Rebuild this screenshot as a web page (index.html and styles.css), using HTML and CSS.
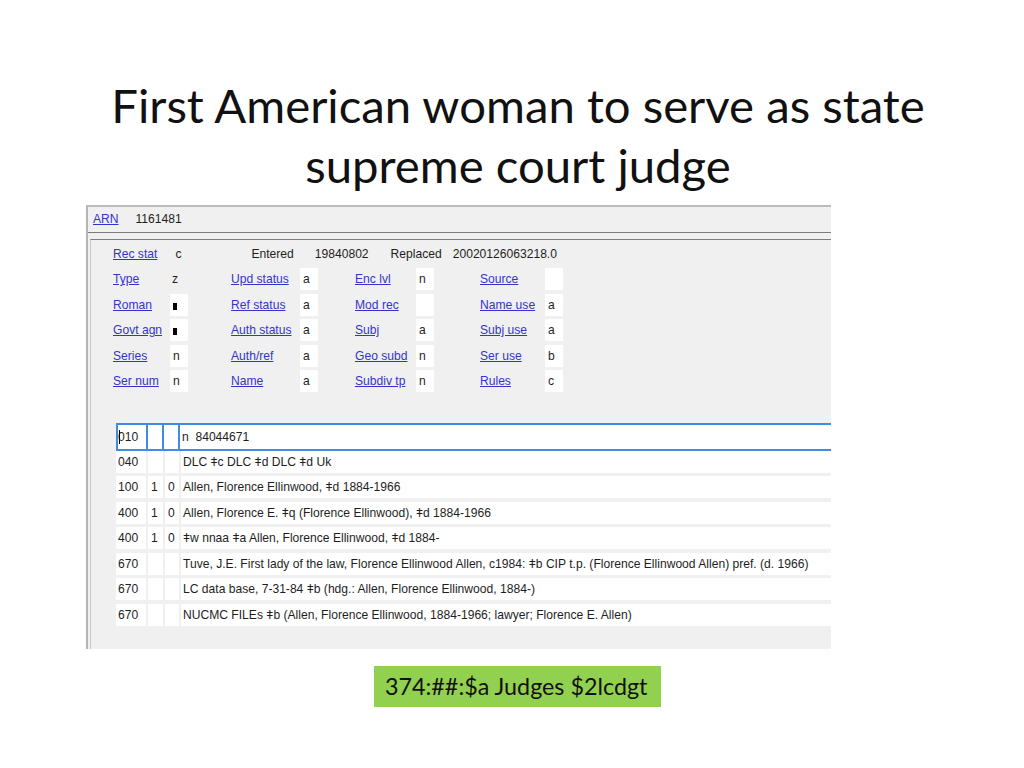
FILE: index.html
```html
<!DOCTYPE html>
<html lang="en">
<head>
    <meta charset="UTF-8">
    <title>First American woman to serve as state supreme court judge</title>
    <link rel="stylesheet" href="styles.css">
</head>
<body>
    <h1 class="title">First American woman to serve as state<br>supreme court judge</h1>

    <div class="shot">
        <div class="arn-bar">
            <a class="lnk">ARN</a>
            <span class="arn-num">1161481</span>
        </div>

        <div class="record">
            <div class="fixed">
                <div class="fx-head">
                    <a class="lnk">Rec stat</a>
                    <span class="rs-val">c</span>
                    <span class="ent-lbl">Entered</span>
                    <span class="ent-val">19840802</span>
                    <span class="rep-lbl">Replaced</span>
                    <span class="rep-val">20020126063218.0</span>
                </div>
                <div class="fx-grid">
                    <div class="fx"><a class="lnk">Type</a><span class="val plain">z</span></div>
                    <div class="fx"><a class="lnk">Upd status</a><span class="val">a</span></div>
                    <div class="fx"><a class="lnk">Enc lvl</a><span class="val">n</span></div>
                    <div class="fx"><a class="lnk">Source</a><span class="val"></span></div>

                    <div class="fx"><a class="lnk">Roman</a><span class="val"><i class="blk"></i></span></div>
                    <div class="fx"><a class="lnk">Ref status</a><span class="val">a</span></div>
                    <div class="fx"><a class="lnk">Mod rec</a><span class="val"></span></div>
                    <div class="fx"><a class="lnk">Name use</a><span class="val">a</span></div>

                    <div class="fx"><a class="lnk">Govt agn</a><span class="val"><i class="blk"></i></span></div>
                    <div class="fx"><a class="lnk">Auth status</a><span class="val">a</span></div>
                    <div class="fx"><a class="lnk">Subj</a><span class="val">a</span></div>
                    <div class="fx"><a class="lnk">Subj use</a><span class="val">a</span></div>

                    <div class="fx"><a class="lnk">Series</a><span class="val">n</span></div>
                    <div class="fx"><a class="lnk">Auth/ref</a><span class="val">a</span></div>
                    <div class="fx"><a class="lnk">Geo subd</a><span class="val">n</span></div>
                    <div class="fx"><a class="lnk">Ser use</a><span class="val">b</span></div>

                    <div class="fx"><a class="lnk">Ser num</a><span class="val">n</span></div>
                    <div class="fx"><a class="lnk">Name</a><span class="val">a</span></div>
                    <div class="fx"><a class="lnk">Subdiv tp</a><span class="val">n</span></div>
                    <div class="fx"><a class="lnk">Rules</a><span class="val">c</span></div>
                </div>
            </div>

            <div class="fields">
                <div class="vrow sel">
                    <div class="cell tag"><span class="caret"></span>010</div>
                    <div class="cell"></div>
                    <div class="cell"></div>
                    <div class="cell data">n&nbsp; 84044671</div>
                </div>
                <div class="vrow">
                    <div class="cell tag">040</div>
                    <div class="cell"></div>
                    <div class="cell"></div>
                    <div class="cell data">DLC &#450;c DLC &#450;d DLC &#450;d Uk</div>
                </div>
                <div class="vrow">
                    <div class="cell tag">100</div>
                    <div class="cell">1</div>
                    <div class="cell">0</div>
                    <div class="cell data">Allen, Florence Ellinwood, &#450;d 1884-1966</div>
                </div>
                <div class="vrow">
                    <div class="cell tag">400</div>
                    <div class="cell">1</div>
                    <div class="cell">0</div>
                    <div class="cell data">Allen, Florence E. &#450;q (Florence Ellinwood), &#450;d 1884-1966</div>
                </div>
                <div class="vrow">
                    <div class="cell tag">400</div>
                    <div class="cell">1</div>
                    <div class="cell">0</div>
                    <div class="cell data">&#450;w nnaa &#450;a Allen, Florence Ellinwood, &#450;d 1884-</div>
                </div>
                <div class="vrow">
                    <div class="cell tag">670</div>
                    <div class="cell"></div>
                    <div class="cell"></div>
                    <div class="cell data">Tuve, J.E. First lady of the law, Florence Ellinwood Allen, c1984: &#450;b CIP t.p. (Florence Ellinwood Allen) pref. (d. 1966)</div>
                </div>
                <div class="vrow">
                    <div class="cell tag">670</div>
                    <div class="cell"></div>
                    <div class="cell"></div>
                    <div class="cell data">LC data base, 7-31-84 &#450;b (hdg.: Allen, Florence Ellinwood, 1884-)</div>
                </div>
                <div class="vrow">
                    <div class="cell tag">670</div>
                    <div class="cell"></div>
                    <div class="cell"></div>
                    <div class="cell data">NUCMC FILEs &#450;b (Allen, Florence Ellinwood, 1884-1966; lawyer; Florence E. Allen)</div>
                </div>
            </div>
        </div>
    </div>

    <div class="note">374:##:$a Judges $2lcdgt</div>
</body>
</html>
```

FILE: styles.css
```css
* {
    margin: 0;
    padding: 0;
    box-sizing: border-box;
}

body {
    background: #fff;
    width: 1024px;
    height: 768px;
    overflow: hidden;
    font-family: 'Liberation Sans', Arial, sans-serif;
}

/* Slide title */
.title {
    font-family: Lato, 'Open Sans', sans-serif;
    font-weight: 400;
    font-size: 47.3px;
    line-height: 60px;
    text-align: center;
    color: #111;
    padding: 75px 0 0 12px;
}

/* Screenshot of the authority record */
.shot {
    margin: 10px 0 0 86px;
    width: 745px;
    height: 444px;
    background: #f0f0f0;
    border-left: 2px solid #b4b4b4;
    overflow: hidden;
    font-size: 12.1px;
    color: #1e1e1e;
}

.lnk {
    color: #3434cc;
    text-decoration: underline;
    white-space: nowrap;
}

.arn-bar {
    height: 28px;
    border-top: 2px solid #bcbcbc;
    border-bottom: 1px solid #7c7c7c;
    display: flex;
    align-items: center;
    padding: 0 0 2px 5px;
}

.arn-num {
    margin-left: 17px;
}

.record {
    margin-top: 6px;
    margin-left: 2px;
    border-top: 1px solid #7c7c7c;
    border-left: 1px solid #c8c8c8;
    height: 410px;
}

.fixed {
    padding: 3px 0 0 22px;
}

.fx-head {
    height: 22px;
    display: flex;
    align-items: center;
}

.rs-val { margin-left: 18px; }
.ent-lbl { margin-left: 70px; }
.ent-val { margin-left: 21px; }
.rep-lbl { margin-left: 22px; }
.rep-val { margin-left: 11px; }

.fx-grid {
    margin-top: 3.4px;
    display: grid;
    grid-template-columns: 118px 124px 125px 100px;
    grid-auto-rows: 22px;
    row-gap: 3.4px;
}

.fx {
    display: flex;
    align-items: center;
    height: 22px;
}

.fx .lnk {
    flex: none;
}

.fx:nth-child(4n+1) .lnk { width: 57px; }
.fx:nth-child(4n+2) .lnk { width: 69px; }
.fx:nth-child(4n+3) .lnk { width: 61px; }
.fx:nth-child(4n+4) .lnk { width: 65px; }

.val {
    width: 18px;
    height: 22px;
    background: #fff;
    padding-left: 3px;
    line-height: 22px;
}

.val.plain {
    background: transparent;
    padding-left: 2px;
}

.blk {
    display: inline-block;
    width: 4px;
    height: 7px;
    background: #000;
    vertical-align: -1px;
}

/* Variable fields */
.fields {
    margin: 31px 0 0 25px;
}

.vrow {
    display: grid;
    grid-template-columns: 30px 15px 14px 1fr;
    column-gap: 2px;
    height: 22px;
}

.vrow + .vrow {
    margin-top: 3.5px;
}

.sel + .vrow {
    margin-top: 0;
}

.cell {
    background: #fff;
    line-height: 22px;
    padding-left: 3px;
    white-space: nowrap;
    overflow: hidden;
}

.cell.tag {
    padding-left: 2px;
}

.cell.data {
    padding-left: 2px;
}

.sel {
    height: 28px;
    background: #3c8ee4;
    padding: 2px 0 2px 2px;
    grid-template-columns: 28px 14px 14px 1fr;
}

.sel .cell {
    line-height: 24px;
}

.sel .tag {
    padding-left: 0;
    position: relative;
}

.caret {
    position: absolute;
    left: 1px;
    top: 5px;
    width: 1px;
    height: 14px;
    background: #000;
}

/* Green note box */
.note {
    margin: 17px 0 0 374px;
    width: 287px;
    height: 41px;
    background: #92d050;
    font-family: Lato, 'Open Sans', sans-serif;
    font-size: 23.3px;
    line-height: 41px;
    padding-left: 11px;
    color: #111;
}
```
